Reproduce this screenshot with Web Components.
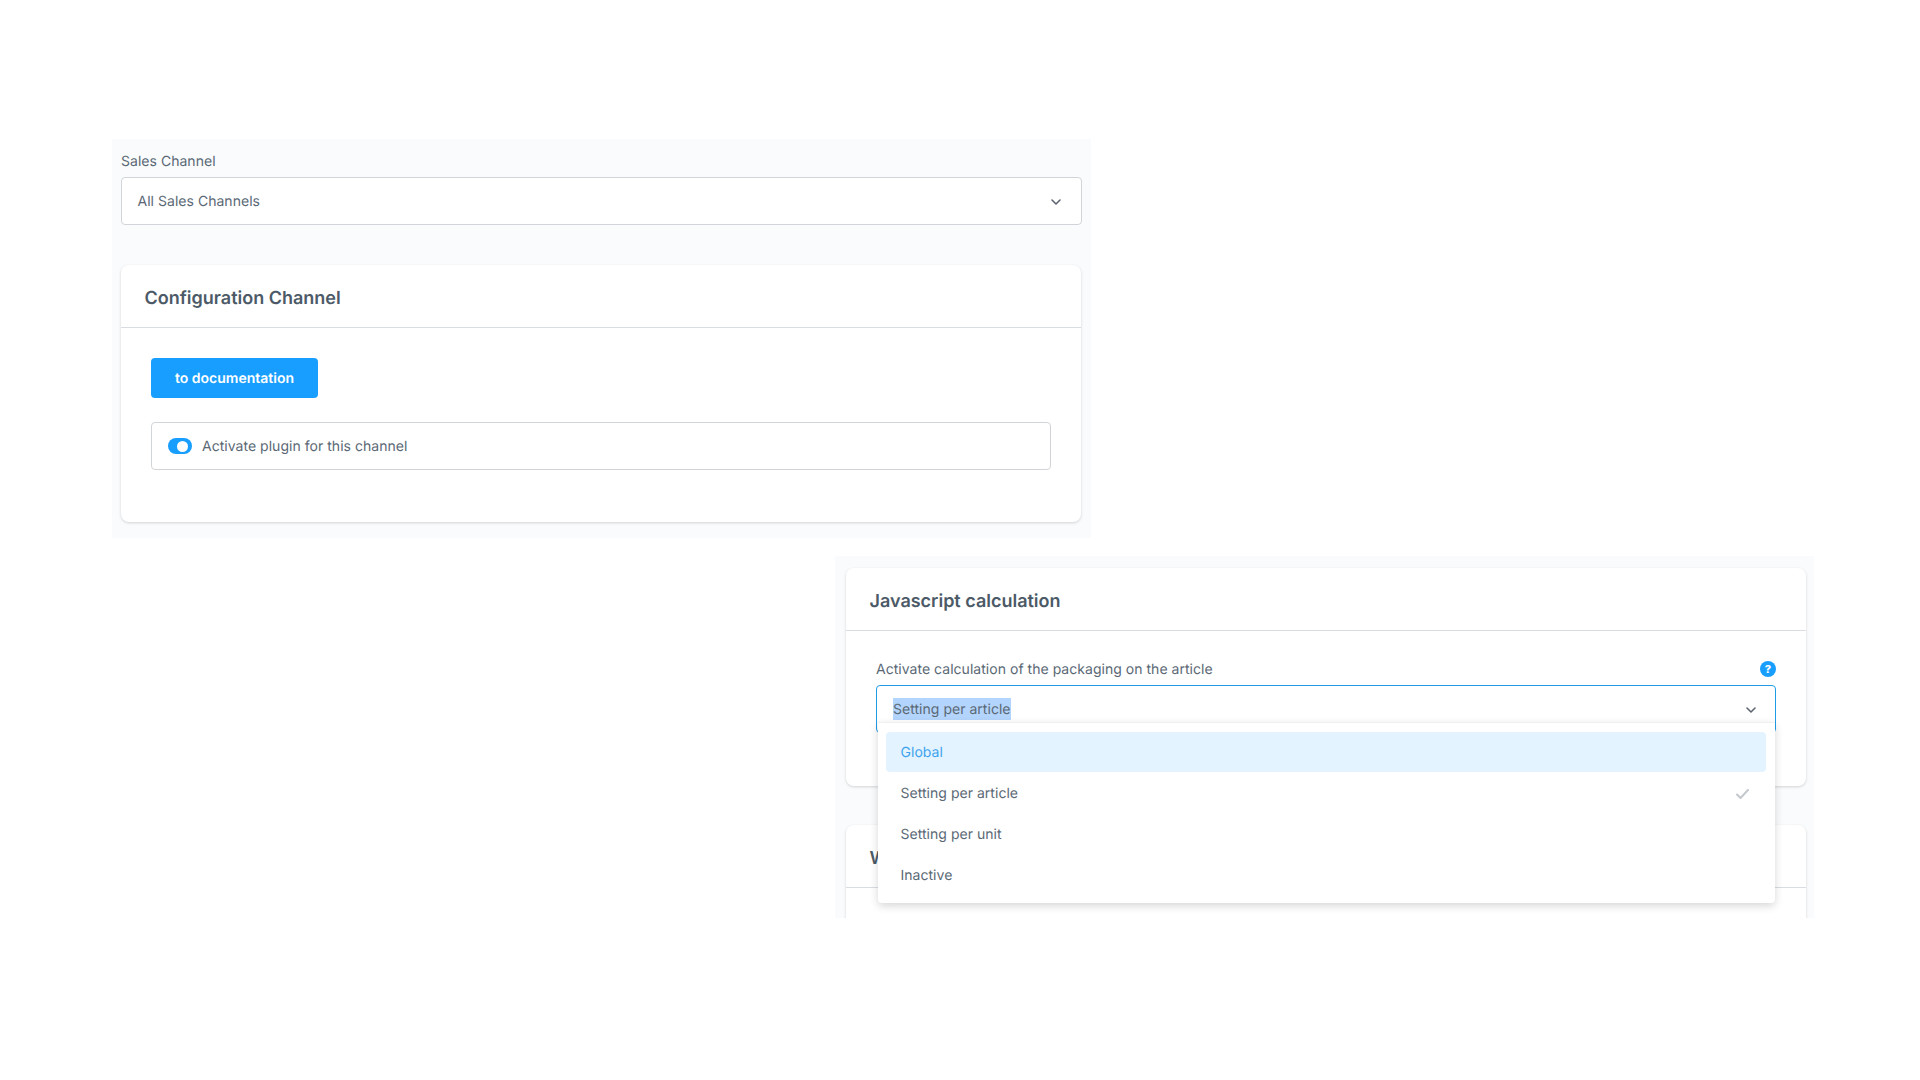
<!DOCTYPE html>
<html lang="en">
<head>
<meta charset="utf-8">
<title>Plugin configuration</title>
<style>
  html, body { margin: 0; background: #fff; }
  body {
    width: 1920px;
    height: 1080px;
    overflow: hidden;
    font-family: Inter, "Liberation Sans", sans-serif;
    font-size: 14px;
    letter-spacing: .03px;
    color: #5a6875;
    text-rendering: geometricPrecision;
    display: flex;
    flex-direction: column;
    padding: 139px 0 0 112px;
    box-sizing: border-box;
  }
  .first { height: 399px; padding: 14px 9px 0; }
  .second { margin: 18px 0 0 723px; height: 362px; padding: 12px 0 0 11px; }
  .gap { margin-top: 40px; }
  .gap-s { margin-top: 24px; }
  .js-card { height: 218px; }
  .next-card { margin-top: 39px; height: 200px; }
</style>
</head>
<body>
<config-panel class="first">
  <select-field label="Sales Channel" value="All Sales Channels"></select-field>
  <config-card class="gap" title-text="Configuration Channel">
    <doc-button>to documentation</doc-button>
    <switch-field class="gap-s">Activate plugin for this channel</switch-field>
  </config-card>
</config-panel>

<config-panel class="second">
  <config-card class="js-card" title-text="Javascript calculation">
    <select-field open selected help label="Activate calculation of the packaging on the article" value="Setting per article">
      <option-item active>Global</option-item>
      <option-item checked>Setting per article</option-item>
      <option-item>Setting per unit</option-item>
      <option-item>Inactive</option-item>
    </select-field>
  </config-card>
  <config-card class="next-card" title-text="W"></config-card>
</config-panel>

<script>
class ConfigPanel extends HTMLElement {
  constructor() {
    super();
    this.attachShadow({ mode: "open" }).innerHTML = `
      <style>
        :host { display: block; width: 979px; box-sizing: border-box; background: #f9fbfc; overflow: hidden; }
      </style>
      <slot></slot>`;
  }
}

class ConfigCard extends HTMLElement {
  connectedCallback() {
    this.attachShadow({ mode: "open" }).innerHTML = `
      <style>
        :host { display: block; width: 960px; height: 257px; background: #fff; border-radius: 8px; box-shadow: 0 1px 3px rgba(0,0,0,.16); box-sizing: border-box; }
        header { height: 63px; box-sizing: border-box; border-bottom: 1px solid #d9dde1; padding: 4px 24px 0 23.5px; display: flex; align-items: center; font-size: 18px; font-weight: 600; letter-spacing: 0; color: #4c5a67; }
        .body { padding: 30px 30px 0; }
      </style>
      <header>${this.getAttribute("title-text")}</header>
      <div class="body"><slot></slot></div>`;
  }
}

class SelectField extends HTMLElement {
  connectedCallback() {
    const open = this.hasAttribute("open");
    const sel = this.hasAttribute("selected");
    const help = this.hasAttribute("help");
    this.attachShadow({ mode: "open" }).innerHTML = `
      <style>
        :host { display: block; position: relative; }
        .lbl { display: flex; justify-content: space-between; align-items: center; height: 16px; margin-bottom: 8px; line-height: 16px; }
        .lbl span { padding-top: 2px; }
        .box { height: 48px; box-sizing: border-box; border: 1px solid ${open ? "#209ce6" : "#d1d5d9"}; border-radius: 4px; background: #fff; display: flex; align-items: center; padding: 0 ${open ? 19 : 20}px 0 ${open ? 16 : 15.5}px; justify-content: space-between; }
        .val.sel { background: #b3d4fc; padding: 3px 0 1px; line-height: 18px; }
        svg { display: block; transform: translateY(1px); }
        .menu { position: absolute; left: 2px; right: 1px; top: 61px; background: #fff; border-top: 1px solid #eef0f2; border-radius: 0 0 4px 4px; box-shadow: 0 3px 8px rgba(0,0,0,.16); padding: 9px 9px 7px 8px; z-index: 2; }
      </style>
      <div class="lbl"><span>${this.getAttribute("label")}</span>${help ? `<help-dot></help-dot>` : ""}</div>
      <div class="box">
        <span class="val ${sel ? "sel" : ""}">${this.getAttribute("value")}</span>
        <svg width="10" height="6" viewBox="0 0 10 6" fill="none"><path d="M1 1l4 4 4-4" stroke="#5d6670" stroke-width="1.6" stroke-linecap="round" stroke-linejoin="round"/></svg>
      </div>
      ${open ? `<div class="menu"><slot></slot></div>` : ""}`;
  }
}

class OptionItem extends HTMLElement {
  connectedCallback() {
    const check = this.hasAttribute("checked");
    this.attachShadow({ mode: "open" }).innerHTML = `
      <style>
        :host { display: flex; align-items: center; justify-content: space-between; height: 41px; box-sizing: border-box; padding: 0 17px 0 14.5px; border-radius: 4px; }
        :host([active]) { background: #e3f3ff; color: #3ea3ee; height: 40px; margin-bottom: 1px; }
        svg { display: block; }
      </style>
      <slot></slot>
      ${check ? `<svg width="13" height="10" viewBox="0 0 13 10" fill="none"><path d="M1 5.5L4.5 9 12 1" stroke="#c4c8cc" stroke-width="2" stroke-linecap="round" stroke-linejoin="round"/></svg>` : ""}`;
  }
}

class HelpDot extends HTMLElement {
  constructor() {
    super();
    this.attachShadow({ mode: "open" }).innerHTML = `
      <style>
        :host { display: flex; align-items: center; justify-content: center; width: 16px; height: 16px; border-radius: 50%; background: #189eff; color: #fff; font-size: 11px; font-weight: 800; line-height: 16px; }
      </style>?`;
  }
}

class DocButton extends HTMLElement {
  constructor() {
    super();
    this.attachShadow({ mode: "open" }).innerHTML = `
      <style>
        :host { display: flex; align-items: center; justify-content: center; width: 167px; height: 40px; background: #189eff; color: #fff; border-radius: 4px; font-size: 14px; font-weight: 600; letter-spacing: 0; }
      </style>
      <slot></slot>`;
  }
}

class SwitchField extends HTMLElement {
  constructor() {
    super();
    this.attachShadow({ mode: "open" }).innerHTML = `
      <style>
        :host { display: flex; align-items: center; gap: 10px; width: 900px; height: 48px; box-sizing: border-box; border: 1px solid #d1d5d9; border-radius: 4px; padding: 0 16px; }
        .track { width: 24px; height: 16px; border-radius: 8px; background: #189eff; display: flex; align-items: center; justify-content: flex-end; padding: 0 4px; box-sizing: border-box; }
        .knob { width: 11px; height: 11px; border-radius: 50%; background: #fff; }
      </style>
      <span class="track"><span class="knob"></span></span>
      <span><slot></slot></span>`;
  }
}

customElements.define("config-panel", ConfigPanel);
customElements.define("config-card", ConfigCard);
customElements.define("select-field", SelectField);
customElements.define("option-item", OptionItem);
customElements.define("help-dot", HelpDot);
customElements.define("doc-button", DocButton);
customElements.define("switch-field", SwitchField);
</script>
</body>
</html>
